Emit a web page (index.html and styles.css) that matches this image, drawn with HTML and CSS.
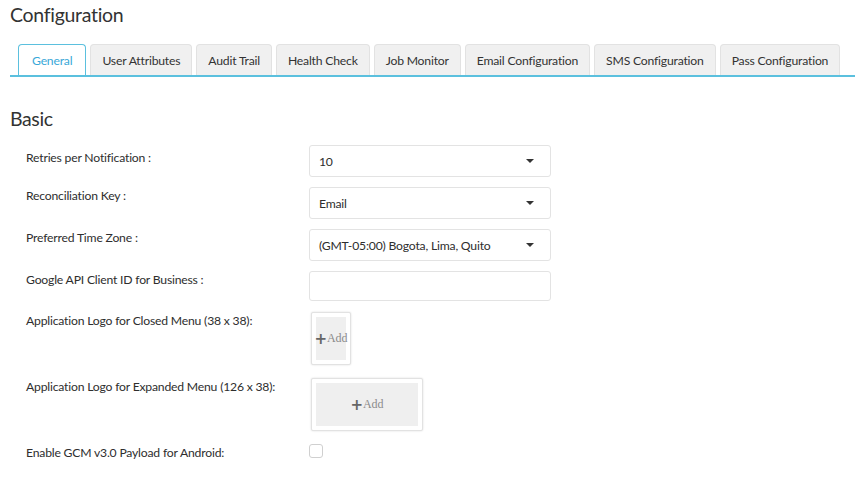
FILE: index.html
```html
<!DOCTYPE html>
<html>
<head>
<meta charset="utf-8">
<link rel="stylesheet" href="styles.css">
</head>
<body>
<div class="page">
  <h1 class="title">Configuration</h1>
  <div class="tabs">
    <div class="tab active">General</div>
    <div class="tab">User Attributes</div>
    <div class="tab">Audit Trail</div>
    <div class="tab">Health Check</div>
    <div class="tab">Job Monitor</div>
    <div class="tab">Email Configuration</div>
    <div class="tab">SMS Configuration</div>
    <div class="tab">Pass Configuration</div>
  </div>
  <h2 class="section">Basic</h2>
  <div class="form">
    <div class="row r1">
      <div class="label">Retries per Notification :</div>
      <div class="select"><span>10</span><i class="caret"></i></div>
    </div>
    <div class="row">
      <div class="label">Reconciliation Key :</div>
      <div class="select"><span>Email</span><i class="caret"></i></div>
    </div>
    <div class="row">
      <div class="label">Preferred Time Zone :</div>
      <div class="select"><span>(GMT-05:00) Bogota, Lima, Quito</span><i class="caret"></i></div>
    </div>
    <div class="row r4">
      <div class="label">Google API Client ID for Business :</div>
      <div class="input"></div>
    </div>
    <div class="row r5">
      <div class="label">Application Logo for Closed Menu (38 x 38):</div>
      <div class="logo small"><div class="add"><b>+</b>Add</div></div>
    </div>
    <div class="row r6">
      <div class="label">Application Logo for Expanded Menu (126 x 38):</div>
      <div class="logo wide"><div class="add"><b>+</b>Add</div></div>
    </div>
    <div class="row">
      <div class="label">Enable GCM v3.0 Payload for Android:</div>
      <div class="checkbox"></div>
    </div>
  </div>
</div>
</body>
</html>
```
FILE: styles.css
```css
* { box-sizing: border-box; }
html, body { margin: 0; padding: 0; background: #fff; }
body {
  font-family: "Lato", "Open Sans", sans-serif;
  color: #333;
  width: 855px;
  height: 482px;
  overflow: hidden;
}
.page { padding: 0 0 0 10px; }
.title {
  margin: 0;
  padding-top: 2px;
  font-size: 19.5px;
  letter-spacing: -0.3px;
  font-weight: 400;
  line-height: 26px;
  color: #333;
}
.tabs {
  display: flex;
  margin-top: 16px;
  padding-left: 8px;
  border-bottom: 2px solid #5bc0de;
  height: 33px;
  gap: 4px;
}
.tab {
  height: 31px;
  padding: 0 11px;
  background: #f0f0f0;
  border: 1px solid #e2e2e2;
  border-bottom: none;
  border-radius: 4px 4px 0 0;
  font-size: 12.2px;
  letter-spacing: -0.2px;
  line-height: 31px;
  color: #333;
  white-space: nowrap;
}
.tab.active {
  padding: 0 13px;
  background: #fff;
  border: 1.5px solid #5bc0de;
  border-bottom: none;
  color: #3aa8d8;
}
.section {
  margin: 0;
  margin-top: 29px;
  font-size: 19.5px;
  letter-spacing: -0.4px;
  font-weight: 400;
  line-height: 26px;
  color: #333;
}
.form {
  padding-left: 16px;
  margin-top: 13px;
  display: flex;
  flex-direction: column;
  gap: 10px;
}
.row { display: flex; align-items: flex-start; }
.label {
  width: 283px;
  padding-top: 1px;
  font-size: 12.2px;
  letter-spacing: -0.2px;
  line-height: 16px;
  color: #2e2e2e;
}
.r1 .label { padding-top: 5px; }
.select, .input {
  width: 242px;
  height: 32px;
  border: 1px solid #e3e3e3;
  border-radius: 3px;
  display: flex;
  align-items: center;
  justify-content: space-between;
  padding: 0 16px 0 9px;
  font-size: 12.2px;
  letter-spacing: -0.2px;
  color: #2e2e2e;
}
.input { height: 30px; }
.caret {
  width: 0; height: 0;
  border-left: 4px solid transparent;
  border-right: 4px solid transparent;
  border-top: 4px solid #333;
}
.r5 { margin-top: 1px; }
.r6, .r6 + .row { margin-top: 3px; }
.logo {
  margin-left: 2px;
  border: 1px solid #e2e2e2;
  border-radius: 2px;
  box-shadow: 0 0 2px rgba(0,0,0,0.15);
  padding: 4px;
  background: #fff;
}
.logo .add {
  background: #efefef;
  color: #8a8a8a;
  font-family: "Liberation Serif", serif;
  font-size: 12px;
  display: flex;
  align-items: center;
  justify-content: center;
}
.logo .add b {
  font-family: "DejaVu Sans", sans-serif;
  font-size: 15px;
  font-weight: 700;
  color: #666;
  line-height: 12px;
}
.logo.small { width: 40px; height: 53px; }
.logo.small .add { height: 43px; }
.logo.wide { width: 112px; height: 53px; }
.logo.wide .add { height: 43px; }
.checkbox {
  width: 14px; height: 14px;
  border: 1px solid #d0d0d0;
  border-radius: 3px;
}
```
